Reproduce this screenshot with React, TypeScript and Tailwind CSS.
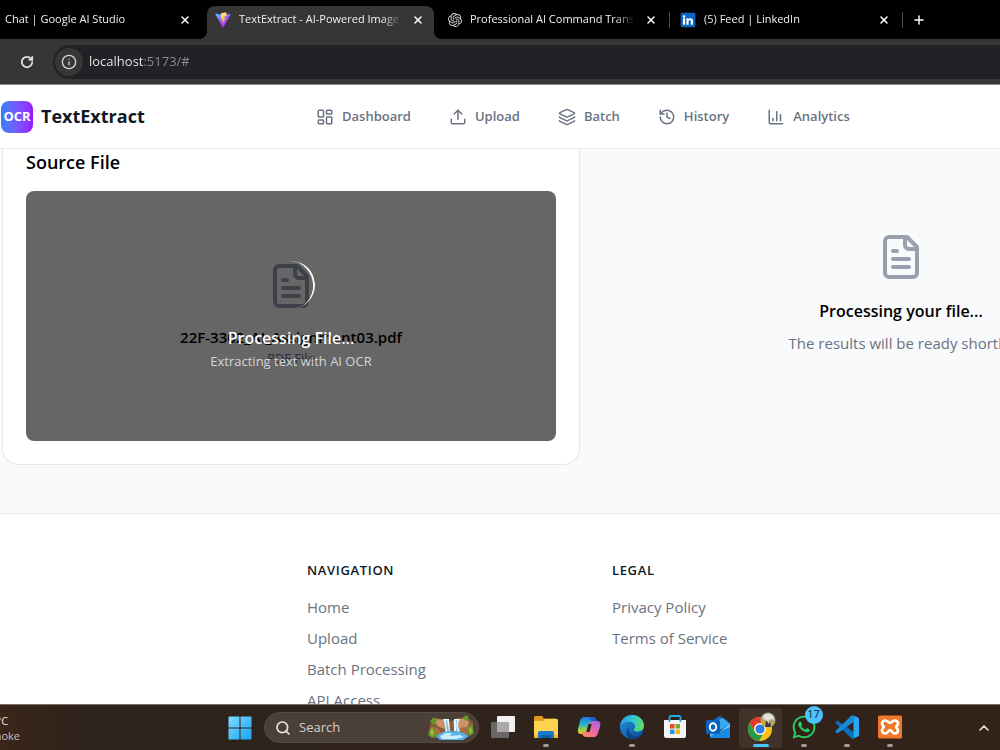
import React from "react";
import { ChartColumn, ChevronUp, History, Info, Layers, LayoutDashboard, Plus, RotateCw, Search, Upload, X } from "lucide-react";
import { SiOpenai } from "react-icons/si";
import { FaWhatsapp } from "react-icons/fa";

function ViteLogo() {
  return (
    <svg viewBox="0 0 32 32" className="size-4 shrink-0" aria-hidden="true">
      <defs>
        <linearGradient id="vite-a" x1="0" y1="0" x2="0.6" y2="1">
          <stop offset="0" stopColor="#41d1ff" />
          <stop offset="0.6" stopColor="#a24bff" />
          <stop offset="1" stopColor="#bd34fe" />
        </linearGradient>
        <linearGradient id="vite-b" x1="0" y1="0" x2="0" y2="1">
          <stop offset="0" stopColor="#ffea83" />
          <stop offset="1" stopColor="#ffa800" />
        </linearGradient>
      </defs>
      <path fill="url(#vite-a)" d="M31 5 17 30.500a1 1 0 0 1-1.700 0L1 5a1 1 0 0 1 1.100-1.500L16 6l14-2.500A1 1 0 0 1 31 5Z" />
      <path fill="url(#vite-b)" d="m22.500.500-10.300 2-.8 11 3 .2-1 5 3-1-1.500 7 6.500-12.500-3.300.6 1.100-4 4.200-.6Z" />
    </svg>
  );
}

function LinkedInLogo() {
  return (
    <svg viewBox="0 0 24 24" className="size-4 shrink-0" aria-hidden="true">
      <rect x="1" y="1" width="22" height="22" rx="2" fill="#0a66c2" />
      <path fill="#fff" d="M4.500 9.500h3.200V19H4.500zM6.100 4.700a1.900 1.900 0 1 1 0 3.800 1.900 1.900 0 0 1 0-3.800ZM9.700 9.500h3v1.400c.5-.9 1.600-1.600 3-1.600 3 0 3.700 2 3.700 4.500V19h-3.200v-4.600c0-1.200 0-2.400-1.500-2.400s-1.800 1.100-1.800 2.300V19H9.700z" />
    </svg>
  );
}

function FileIcon({ className }: { className: string }) {
  return (
    <svg viewBox="0 0 24 24" fill="none" stroke="currentColor" strokeWidth="2" strokeLinecap="round" strokeLinejoin="round" className={className} aria-hidden="true">
      <path d="M15 2H6a2 2 0 0 0-2 2v16a2 2 0 0 0 2 2h12a2 2 0 0 0 2-2V7Z" />
      <path d="M14 2v4a2 2 0 0 0 2 2h4M10 9H8M16 13H8M16 17H8" />
    </svg>
  );
}

function CloseTab({ label }: { label: string }) {
  return (
    <button type="button" aria-label={"Close " + label} className="flex size-4 shrink-0 items-center justify-center text-white">
      <X className="size-3" strokeWidth={3} />
    </button>
  );
}

function TabTitle({ children }: { children: string }) {
  return (
    <a href="#" className="min-w-0 flex-1 overflow-hidden whitespace-nowrap text-[#f0f0f0] [mask-image:linear-gradient(90deg,#000_88%,transparent)]">
      {children}
    </a>
  );
}

function BrowserBar() {
  return (
    <div className="shrink-0 bg-black">
      <div className="flex h-[39px] items-center overflow-hidden text-[11px] font-medium">
        <div className="flex w-[199px] shrink-0 items-center gap-3 pr-1.5 pl-[5px]">
          <TabTitle>Chat | Google AI Studio</TabTitle>
          <CloseTab label="Chat" />
        </div>
        <span className="size-2 shrink-0 self-end bg-[radial-gradient(circle_at_0_0,transparent_8px,#363636_8px)]" />
        <div className="flex h-[33px] w-[227px] shrink-0 items-center gap-2 self-end rounded-t-lg bg-[#363636] px-2 pb-1.5">
          <ViteLogo />
          <TabTitle>TextExtract - AI-Powered Image to Text</TabTitle>
          <CloseTab label="TextExtract" />
        </div>
        <span className="size-2 shrink-0 self-end bg-[radial-gradient(circle_at_100%_0,transparent_8px,#363636_8px)]" />
        <div className="flex w-[227px] shrink-0 items-center gap-2 pr-2.5 pl-1.5">
          <SiOpenai className="size-3.5 shrink-0 text-[#d8d8d8]" />
          <TabTitle>Professional AI Command Translator</TabTitle>
          <CloseTab label="Professional AI Command Translator" />
        </div>
        <span className="h-4 w-px shrink-0 bg-[#4a4a4a]" />
        <div className="flex w-[232px] shrink-0 items-center gap-2 px-2.5">
          <LinkedInLogo />
          <TabTitle>(5) Feed | LinkedIn</TabTitle>
          <CloseTab label="LinkedIn" />
        </div>
        <span className="h-4 w-px shrink-0 bg-[#4a4a4a]" />
        <button type="button" aria-label="New tab" className="ml-2 flex size-4 items-center justify-center text-white">
          <Plus className="size-3.5" strokeWidth={2.5} />
        </button>
      </div>
      <div className="flex h-[46px] items-center border-b border-[#8a8a8a] bg-[#363636] pl-5">
        <button type="button" aria-label="Reload" className="text-[#e6e6e6]">
          <RotateCw className="size-3.5" strokeWidth={3} />
        </button>
        <div className="ml-[19px] flex h-[34px] flex-1 items-center gap-1.5 rounded-l-full bg-[#212225] pl-0.5">
          <button type="button" aria-label="Site information" className="flex size-7 items-center justify-center rounded-full bg-[#363636] text-[#d6d6d6]">
            <Info className="size-4" />
          </button>
          <input
            aria-label="Address"
            defaultValue="localhost:5173/#"
            className="min-w-0 flex-1 bg-[linear-gradient(90deg,#f0f0f0_55px,#8c8c8c_55px)] bg-clip-text text-[13px] text-transparent outline-none"
          />
        </div>
      </div>
    </div>
  );
}

const navItems = [
  { label: "Dashboard", Icon: LayoutDashboard },
  { label: "Upload", Icon: Upload },
  { label: "Batch", Icon: Layers },
  { label: "History", Icon: History },
  { label: "Analytics", Icon: ChartColumn },
];

function SiteHeader() {
  return (
    <header className="flex h-16 shrink-0 items-center border-b border-[#e9ebee] bg-white pl-px">
      <a href="#" className="flex w-[315px] items-center gap-2">
        <span className="flex size-8 items-center justify-center rounded-lg bg-linear-to-r from-blue-500 to-purple-600 text-[13px] font-bold text-white">OCR</span>
        <span className="text-[18px] font-bold text-gray-900">TextExtract</span>
      </a>
      <nav className="flex gap-[38px]">
        {navItems.map(({ label, Icon }) => (
          <a key={label} href="#" className="flex items-center gap-2 text-[13px] font-semibold text-gray-500">
            <Icon className="size-[18px]" />
            {label}
          </a>
        ))}
      </nav>
    </header>
  );
}

function SourceCard() {
  return (
    <section className="rounded-b-2xl border border-t-0 border-gray-200 bg-white px-[23px] pb-[23px]">
      <h2 className="pb-4 text-[18px] leading-[26px] font-semibold text-black">Source File</h2>
      <div className="relative flex h-[250px] flex-col items-center overflow-hidden rounded-lg bg-white pt-[71px] text-center">
        <FileIcon className="size-12 text-gray-400" />
        <p className="mt-[15px] text-[15px] leading-6 font-semibold text-black">22F-3302_AI_Assignment03.pdf</p>
        <p className="text-[13px] leading-[18px] text-gray-500">PDF File</p>
        <div className="absolute inset-0 flex flex-col items-center bg-black/60 pt-[70px]">
          <span className="size-12 -rotate-12 rounded-full border-r-2 border-white" />
          <p className="mt-[17px] text-[16px] leading-6 font-semibold text-white">Processing File...</p>
          <p className="text-[13px] leading-[22px] text-gray-300">Extracting text with AI OCR</p>
        </div>
      </div>
    </section>
  );
}

function ResultPanel() {
  return (
    <section className="flex flex-col items-center pt-[84px] text-center">
      <FileIcon className="size-12 text-gray-400" />
      <h2 className="mt-4 text-[16px] leading-7 font-semibold text-black">Processing your file...</h2>
      <p className="mt-1.5 text-[15px] leading-6 text-gray-500">The results will be ready shortly.</p>
    </section>
  );
}

const footerColumns = [
  { title: "NAVIGATION", links: ["Home", "Upload", "Batch Processing", "API Access"] },
  { title: "LEGAL", links: ["Privacy Policy", "Terms of Service"] },
];

function SiteFooter() {
  return (
    <footer className="mt-12 border-t border-gray-200 bg-white pt-[47px] pb-6">
      <div className="grid w-[1190px] grid-cols-4 gap-8 pl-0.5">
        {footerColumns.map(({ title, links }, i) => (
          <div key={title} className={i === 0 ? "col-start-2" : ""}>
            <h3 className="text-[13px] leading-[18px] font-semibold tracking-wider text-gray-900">{title}</h3>
            <ul className="mt-[17px] space-y-2 text-[15px] leading-[23px] text-gray-500">
              {links.map((link) => (
                <li key={link}>
                  <a href="#">{link}</a>
                </li>
              ))}
            </ul>
          </div>
        ))}
      </div>
    </footer>
  );
}

function WindowsLogo() {
  return (
    <svg viewBox="0 0 24 24" className="size-6" aria-hidden="true">
      <defs>
        <linearGradient id="win" x1="0" y1="0" x2="24" y2="24" gradientUnits="userSpaceOnUse">
          <stop offset="0" stopColor="#7fdcff" />
          <stop offset="1" stopColor="#17a3f5" />
        </linearGradient>
      </defs>
      <path fill="url(#win)" d="M1 .5h10.500v11H.5V1Zm11.500 0H23l.5.500v10.500h-11ZM.5 12.500h11v11H1L.5 23Zm12 0h11V23l-.5.500H12.500Z" />
    </svg>
  );
}

function WaterfallArt() {
  return (
    <svg viewBox="0 0 46 26" className="h-[26px] w-[46px] shrink-0" aria-hidden="true">
      <path fill="#8a5b36" d="M2 9 7 3l9 1 6 2 8-3 9-1 6 5v11l-8 5H6l-5-5Z" />
      <path fill="#c99566" d="m8 4 8 1 3 4-2 5-6-2-4-4ZM25 6l12-3 4 4-2 7-8 2-5-4Z" />
      <path fill="#a77044" d="m3 12 7 1 4 6-8 1-5-3ZM32 13l10-2 2 7-9 2Z" />
      <path fill="#e6f6ff" d="M15 4h6l1 12-5 2c1-6 0-10-2-14ZM26 4h6c-3 5-2 9 0 13l-6-1Z" />
      <path fill="#72bfe9" d="M18 5h1l2 11-2 1ZM28 5h1c-1 5-1 8 1 12l-2-1Z" />
      <path fill="#55b4e9" d="m8 21 7-4 8-1 10 1 8 4-6 4H12Z" />
      <path fill="#c9efff" d="m12 21 6-3h6l-2 3 10-1 4 2-8 2H14Z" />
      <path fill="#68952d" d="m1 17 3-6 3 5 2 5-5 2-4-3ZM2 6l4-4 3 3-3 5ZM35 2l4-2 2 4-4 2ZM40 12l4-3 2 9-4 3-3-4Z" />
      <path fill="#a8bd36" d="m2 17 2-4 2 5-2 3ZM41 14l2-2 1 5-2 2Z" />
    </svg>
  );
}

function TaskViewIcon() {
  return (
    <svg viewBox="0 0 26 26" className="size-[26px]" aria-hidden="true">
      <rect x="1" y="8" width="18" height="16" rx="1" fill="#6a6867" />
      <rect x="7" y="2" width="18" height="16" rx="1" fill="#f1f1f1" />
      <path d="M7 8h12v10H7z" fill="#aaa9a8" />
    </svg>
  );
}

function FolderIcon() {
  return (
    <svg viewBox="0 0 26 26" className="size-[26px]" aria-hidden="true">
      <path fill="#e09b18" d="M1 3.500Q1 2 2.500 2H9l2 2.500h12V10H1Z" />
      <path fill="#ffd34f" d="M1 7h9l2-2h12q1 0 1 1v17q0 1-1 1H2q-1 0-1-1Z" />
      <path fill="#f3ba2d" d="M1 21h24v2q0 1-1 1H2q-1 0-1-1Z" />
      <path fill="#1679cf" d="M5 24v-5q0-2 2-2h12q2 0 2 2v5Z" />
      <path fill="#0e5ba7" d="M8 21h10v3H8Z" />
    </svg>
  );
}

function CopilotIcon() {
  return (
    <svg viewBox="0 0 26 26" className="size-[26px]" aria-hidden="true">
      <defs>
        <linearGradient id="cp-a" x1="0" y1="0" x2="0" y2="1">
          <stop offset="0" stopColor="#1975e8" />
          <stop offset="0.45" stopColor="#2cb4c8" />
          <stop offset="0.75" stopColor="#9bcf45" />
          <stop offset="1" stopColor="#f1c82c" />
        </linearGradient>
        <linearGradient id="cp-b" x1="1" y1="0" x2="0" y2="1">
          <stop offset="0" stopColor="#9a62f4" />
          <stop offset="0.5" stopColor="#ef66a4" />
          <stop offset="1" stopColor="#ff9650" />
        </linearGradient>
      </defs>
      <path fill="url(#cp-a)" d="M8 3h8q3 0 4 4l.5 2h-4q-3 0-3.700 3l-1.500 5q-.8 3-4 3H5q-4 0-3-5L4 7q1-4 4-4Z" />
      <path fill="#1560c8" d="M14 3h3q3 0 3.500 3l.8 3h-4Q15 9 14.600 6Z" />
      <path fill="url(#cp-b)" d="M18 23h-8q-3 0-4-4l-.3-1H8q3 0 4-3l1.500-5q.8-3 4-3H21q4 0 3.300 5L22 19q-1 4-4 4Z" />
      <path fill="#2d231c" d="m12.500 10-2.300 8h3.300l2.300-8Z" />
    </svg>
  );
}

function EdgeIcon() {
  return (
    <svg viewBox="0 0 26 26" className="size-[26px]" aria-hidden="true">
      <defs>
        <linearGradient id="ed-a" x1="0" y1="0.300" x2="1" y2="0.500">
          <stop offset="0" stopColor="#259ce2" />
          <stop offset="0.5" stopColor="#31c7d2" />
          <stop offset="1" stopColor="#62db60" />
        </linearGradient>
        <linearGradient id="ed-b" x1="0" y1="0" x2="0.800" y2="1">
          <stop offset="0" stopColor="#2596df" />
          <stop offset="1" stopColor="#0b4f9d" />
        </linearGradient>
      </defs>
      <circle cx="13" cy="13" r="12" fill="url(#ed-b)" />
      <path fill="url(#ed-a)" d="M1.100 12C1.700 5.500 6.800 1 13.200 1 20 1 25 6 25 11.500c0 3.800-2.800 6-6.200 6-2.300 0-4-.8-4-1.800 0-.7 1.200-1.200 1.200-3.200 0-2.600-2.200-4.700-5.500-4.700-4.500 0-8.500 2-9.400 4.200Z" />
      <path fill="#0d437f" d="M9.500 13.500c-1 5 3.500 9.500 9.500 8.500 1.800-.3 3.200-1.200 4.300-2.300-2.300 3.900-6.300 5.800-10.300 5.300-5.500-1-7.500-7-3.500-11.500Z" />
    </svg>
  );
}

function StoreIcon() {
  return (
    <svg viewBox="0 0 26 26" className="size-[26px]" aria-hidden="true">
      <path d="M7.500 8V3.500Q7.500 2 9 2h8q1.500 0 1.500 1.500V8" fill="none" stroke="#26a7e8" strokeWidth="1.800" />
      <path fill="#f4f4f4" d="M2 6h22v16q0 2-2 2H4q-2 0-2-2Z" />
      <path d="M7.500 6v2M18.500 6v2" stroke="#26a7e8" strokeWidth="1.800" />
      <path fill="#e94b25" d="M8 10h4.500v4.500H8z" />
      <path fill="#74ad20" d="M13.500 10H18v4.500h-4.500z" />
      <path fill="#219ae0" d="M8 15.500h4.500V20H8z" />
      <path fill="#f6b51b" d="M13.500 15.500H18V20h-4.500z" />
    </svg>
  );
}

function OutlookIcon() {
  return (
    <svg viewBox="0 0 26 26" className="size-[26px]" aria-hidden="true">
      <path fill="#1267b8" d="M4 10 13 2.500q1.500-1 3 0L25 9v6H4Z" />
      <path fill="#39a9ee" d="m10 7 8-3 7 6-10 6Z" />
      <path fill="#62d1fb" d="M5 13v9q0 2 2 2h16q2 0 2-2V10l-11 8Z" />
      <path fill="#1a8be0" d="m5 22 20-9v9q0 2-2 2H7q-2 0-2-2Z" />
      <rect x="1" y="6" width="14" height="14" rx="1.500" fill="#0c63bd" />
      <ellipse cx="8" cy="13" rx="3.200" ry="3.700" fill="none" stroke="#fff" strokeWidth="1.900" />
    </svg>
  );
}

function ChromeIcon() {
  return (
    <svg viewBox="0 0 30 30" className="size-[30px]" aria-hidden="true">
      <circle cx="14" cy="17" r="12" fill="#fbc116" />
      <path fill="#e33b2e" d="M3.600 11A12 12 0 0 1 24.400 11H14a6 6 0 0 0-5.200 9Z" />
      <path fill="#249a4b" d="M3.600 11 8.800 20A6 6 0 0 0 14 23q1.500 0 2.800-.6L13 29A12 12 0 0 1 3.600 11Z" />
      <circle cx="14" cy="17" r="5.800" fill="#fff" />
      <circle cx="14" cy="17" r="4.600" fill="#3279e6" />
      <circle cx="22" cy="8" r="7.500" fill="#a5a39a" />
      <path fill="#e6e4d9" d="M17 4q5-5 10 0l1 4-3-1-3 2-4-1Z" />
      <path fill="#d5a522" d="m15 11 4-4 2 3-3 4ZM25 10l2-2 1 4-2 2Z" />
      <path fill="#37424b" d="m19 15 1-6h4l1 6Z" />
      <path fill="#e9d7bd" d="m21 9 1-3 1.500 3-.5 3Z" />
    </svg>
  );
}

function CodeIcon() {
  return (
    <svg viewBox="0 0 26 26" className="size-[26px]" aria-hidden="true">
      <path fill="#0a6fb8" d="m1 8.500 2.500-2L19.500 18v6L18 25Z" />
      <path fill="#168bd6" d="m1 17.500 2.500 2L19.500 8V2L18 1Z" />
      <path fill="#2aa7f2" d="m18 1 6 2.500q1 .5 1 1.500v16q0 1-1 1.500L18 25q1.500-.2 1.500-2V3q0-1.800-1.500-2Z" />
    </svg>
  );
}

function XamppIcon() {
  return (
    <svg viewBox="0 0 26 26" className="size-[26px]" aria-hidden="true">
      <rect x="1" y="1.500" width="24" height="23" rx="1.500" fill="#f0782a" />
      <path
        d="M8.500 6.500c2 0 2.700 2.300 4.500 2.300s2.500-2.300 4.500-2.300c2.300 0 3.500 1.500 3.500 3.300 0 1.800-1.800 2-1.800 3.200s1.800 1.400 1.800 3.200c0 1.800-1.200 3.300-3.500 3.300-2.500 0-2.200-3.200-4.500-3.200s-2 3.200-4.500 3.200C6.200 19.500 5 18 5 16.200 5 14.400 6.800 14.200 6.800 13S5 11.600 5 9.800c0-1.800 1.200-3.300 3.500-3.300Z"
        fill="none"
        stroke="#fff"
        strokeWidth="2.600"
      />
    </svg>
  );
}

function WhatsAppIcon() {
  return (
    <span className="relative flex">
      <FaWhatsapp className="size-[26px] text-[#2bd064]" />
      <span className="absolute -top-2 -right-1.5 flex size-[18px] items-center justify-center rounded-full bg-[#4cc2ff] text-[11px] text-[#10202c]">17</span>
    </span>
  );
}

const apps = [
  { name: "Task View", Icon: TaskViewIcon, mark: "bg-transparent" },
  { name: "File Explorer", Icon: FolderIcon, mark: "w-1.5 bg-[#a09b97]" },
  { name: "Copilot", Icon: CopilotIcon, mark: "bg-transparent" },
  { name: "Edge", Icon: EdgeIcon, mark: "w-1.5 bg-[#a09b97]" },
  { name: "Microsoft Store", Icon: StoreIcon, mark: "bg-transparent" },
  { name: "Outlook", Icon: OutlookIcon, mark: "bg-transparent" },
  { name: "Chrome", Icon: ChromeIcon, mark: "w-4 bg-[#4cc2ff]", active: true },
  { name: "WhatsApp", Icon: WhatsAppIcon, mark: "w-1.5 bg-[#a09b97]" },
  { name: "Visual Studio Code", Icon: CodeIcon, mark: "w-1.5 bg-[#a09b97]" },
  { name: "XAMPP", Icon: XamppIcon, mark: "w-1.5 bg-[#a09b97]" },
];

function Taskbar() {
  return (
    <div className="flex h-[46px] shrink-0 items-center overflow-hidden border-t border-[#77706a] bg-linear-to-r from-[#3a2519] via-[#2d231c] via-10% to-[#33231a] text-[#e8e4e0]">
      <button type="button" className="flex w-[228px] shrink-0 justify-start text-left text-[11px] leading-[15px]">
        <span className="-ml-4 w-9 text-right">
          <span className="block pr-3">17°C</span>
          <span className="block text-[#c4beb8]">Smoke</span>
        </span>
      </button>
      <button type="button" aria-label="Start" className="shrink-0">
        <WindowsLogo />
      </button>
      <label className="ml-3 flex h-[31px] w-[215px] shrink-0 items-center gap-2 rounded-full border border-[#564c44] bg-[#4a4038] pr-1 pl-2.5">
        <Search className="size-4 shrink-0" strokeWidth={2.5} />
        <input aria-label="Search" placeholder="Search" className="min-w-0 flex-1 bg-transparent text-[13px] outline-none placeholder:text-[#d5d0cb]" />
        <WaterfallArt />
      </label>
      <div className="ml-0.5 flex">
        {apps.map(({ name, Icon, mark, active }) => (
          <button
            key={name}
            type="button"
            aria-label={name}
            className={
              active
                ? "flex h-10 w-[43px] flex-col items-center justify-between rounded bg-[#403329] pb-px"
                : "flex h-10 w-[43px] flex-col items-center justify-between pb-px"
            }
          >
            <span className="flex h-9 items-center pt-0.5">
              <Icon />
            </span>
            <span className={"h-[3px] shrink-0 rounded-full " + mark} />
          </button>
        ))}
      </div>
      <button type="button" aria-label="Show hidden icons" className="mr-2 ml-auto">
        <ChevronUp className="size-4" strokeWidth={2.5} />
      </button>
    </div>
  );
}

export default function App() {
  return (
    <div className="flex h-screen flex-col overflow-hidden bg-gray-50 font-['Open_Sans','Noto_Sans',sans-serif]">
      <BrowserBar />
      <SiteHeader />
      <main className="min-h-0 flex-1 overflow-hidden bg-gray-50">
        <div className="grid w-[1190px] grid-cols-2 items-start gap-8 pl-0.5">
          <SourceCard />
          <ResultPanel />
        </div>
        <SiteFooter />
      </main>
      <Taskbar />
    </div>
  );
}
